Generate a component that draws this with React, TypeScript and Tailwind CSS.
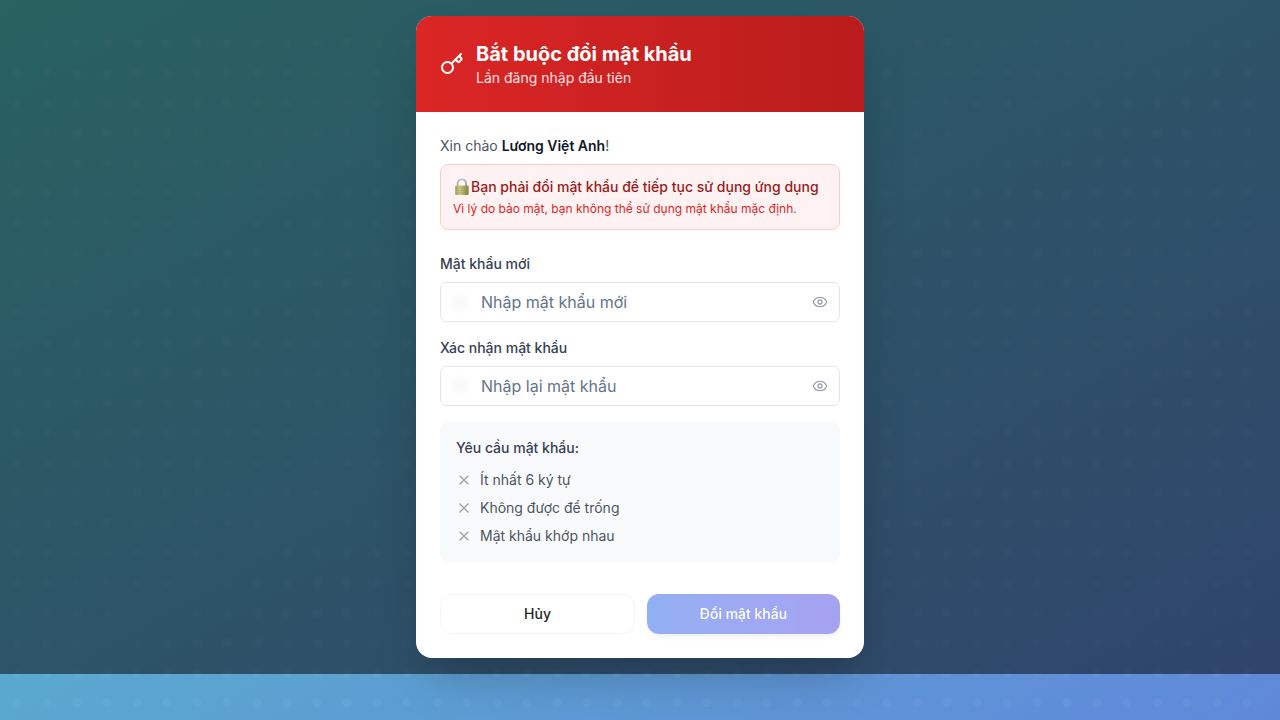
import { useState } from "react";
import { Eye, EyeOff, Key, X, Check } from "lucide-react";

function PadlockIcon() {
  return (
    <svg viewBox="0 0 18 18" aria-hidden="true" className="h-[18px] w-[18px] shrink-0">
      <defs>
        <linearGradient id="lock-body" x1="0" y1="0" x2="1" y2="0">
          <stop offset="0" stopColor="#a8a45c" />
          <stop offset="0.35" stopColor="#cdc988" />
          <stop offset="1" stopColor="#858342" />
        </linearGradient>
        <linearGradient id="lock-shackle" x1="0" y1="0" x2="1" y2="0">
          <stop offset="0" stopColor="#a3adb3" />
          <stop offset="0.5" stopColor="#c6cfd3" />
          <stop offset="1" stopColor="#929ba0" />
        </linearGradient>
      </defs>
      <path
        d="M4.6 9V5.6a4.2 4.2 0 0 1 8.4 0V9"
        fill="none"
        stroke="url(#lock-shackle)"
        strokeWidth="1.7"
      />
      <rect x="2.2" y="7.6" width="13.4" height="9.4" rx="0.9" fill="url(#lock-body)" />
      <path d="M2.6 10.2h12.6M2.6 12.5h12.6M2.6 14.8h12.6" stroke="#77763c" strokeOpacity="0.3" strokeWidth="0.7" />
    </svg>
  );
}

type PasswordFieldProps = {
  id: string;
  label: string;
  placeholder: string;
  value: string;
  onChange: (value: string) => void;
};

function PasswordField({ id, label, placeholder, value, onChange }: PasswordFieldProps) {
  const [visible, setVisible] = useState(false);
  const Icon = visible ? EyeOff : Eye;
  return (
    <div className="flex flex-col gap-2">
      <label htmlFor={id} className="text-sm font-medium text-gray-700">
        {label}
      </label>
      <div className="relative">
        <span
          aria-hidden="true"
          className="absolute top-3 left-3 h-4 w-4 rounded-md bg-neutral-500/6 blur-xs"
        />
        <input
          id={id}
          type={visible ? "text" : "password"}
          value={value}
          onChange={(e) => onChange(e.target.value)}
          placeholder={placeholder}
          className="block h-10 w-full rounded-md border border-gray-200 bg-transparent pr-10 pl-10 text-base text-gray-900 outline-none placeholder:text-[#64748b] focus:border-blue-500"
        />
        <button
          type="button"
          aria-label={visible ? "Ẩn mật khẩu" : "Hiện mật khẩu"}
          onClick={() => setVisible(!visible)}
          className="absolute top-3 right-3 text-[#9ca3af]"
        >
          <Icon className="h-4 w-4" />
        </button>
      </div>
    </div>
  );
}

export default function App() {
  const [password, setPassword] = useState("");
  const [confirm, setConfirm] = useState("");

  const rules = [
    { text: "Ít nhất 6 ký tự", ok: password.length >= 6 },
    { text: "Không được để trống", ok: password.trim().length > 0 },
    { text: "Mật khẩu khớp nhau", ok: password.length > 0 && password === confirm },
  ];
  const valid = rules.every((rule) => rule.ok);

  return (
    <div className="relative min-h-screen bg-linear-to-br from-[#52c4c2] to-[#6088da] font-['Inter','Noto_Sans',sans-serif]">
      <div
        aria-hidden="true"
        className="absolute top-7 right-[18px] bottom-0 left-0.5 bg-[radial-gradient(circle,rgba(255,255,255,0.04)_4px,transparent_5px)] bg-size-[30px_30px]"
      />
      <div className="relative flex items-center justify-center bg-black/50 p-4">
        <div className="w-full max-w-md overflow-hidden rounded-2xl bg-white shadow-2xl">
          <header className="flex items-center gap-3 bg-linear-to-r from-[#dc2626] to-[#b91c1c] p-6 text-white">
            <Key className="h-6 w-6" />
            <div>
              <h1 className="text-xl leading-7 font-bold">Bắt buộc đổi mật khẩu</h1>
              <p className="text-sm text-[#fee2e2]">Lần đăng nhập đầu tiên</p>
            </div>
          </header>

          <form className="p-6" onSubmit={(e) => e.preventDefault()}>
            <p className="text-sm text-[#4b5563]">
              Xin chào <span className="font-semibold text-[#111827]">Lương Việt Anh</span>!
            </p>
            <div className="mt-2 rounded-lg border border-[#fecaca] bg-[#fef2f2] p-3">
              <p className="flex items-center text-sm font-medium text-[#991b1b]">
                <PadlockIcon />
                Bạn phải đổi mật khẩu để tiếp tục sử dụng ứng dụng
              </p>
              <p className="mt-1 text-xs text-[#dc2626]">
                Vì lý do bảo mật, bạn không thể sử dụng mật khẩu mặc định.
              </p>
            </div>

            <div className="mt-6 flex flex-col gap-4">
              <PasswordField
                id="new-password"
                label="Mật khẩu mới"
                placeholder="Nhập mật khẩu mới"
                value={password}
                onChange={setPassword}
              />
              <PasswordField
                id="confirm-password"
                label="Xác nhận mật khẩu"
                placeholder="Nhập lại mật khẩu"
                value={confirm}
                onChange={setConfirm}
              />
              <section className="rounded-lg bg-[#f9fafb] p-4">
                <h2 className="text-sm font-medium text-gray-700">Yêu cầu mật khẩu:</h2>
                <ul className="mt-3 flex flex-col gap-2">
                  {rules.map((rule) => (
                    <li key={rule.text} className="flex items-center gap-2 text-sm text-[#4b5563]">
                      {rule.ok ? (
                        <Check className="h-4 w-4 text-green-500" />
                      ) : (
                        <X className="h-4 w-4 text-[#9ca3af]" />
                      )}
                      {rule.text}
                    </li>
                  ))}
                </ul>
              </section>
            </div>

            <div className="mt-8 flex gap-3">
              <button
                type="button"
                className="h-10 flex-1 rounded-xl border border-gray-100 bg-white px-4 text-sm font-medium text-neutral-800"
              >
                Hủy
              </button>
              <button
                type="submit"
                disabled={!valid}
                className="h-10 flex-1 rounded-xl bg-linear-to-r from-[#2563eb] to-[#4f46e5] px-4 text-sm font-medium text-white shadow-md disabled:opacity-50"
              >
                Đổi mật khẩu
              </button>
            </div>
          </form>
        </div>
      </div>
    </div>
  );
}
